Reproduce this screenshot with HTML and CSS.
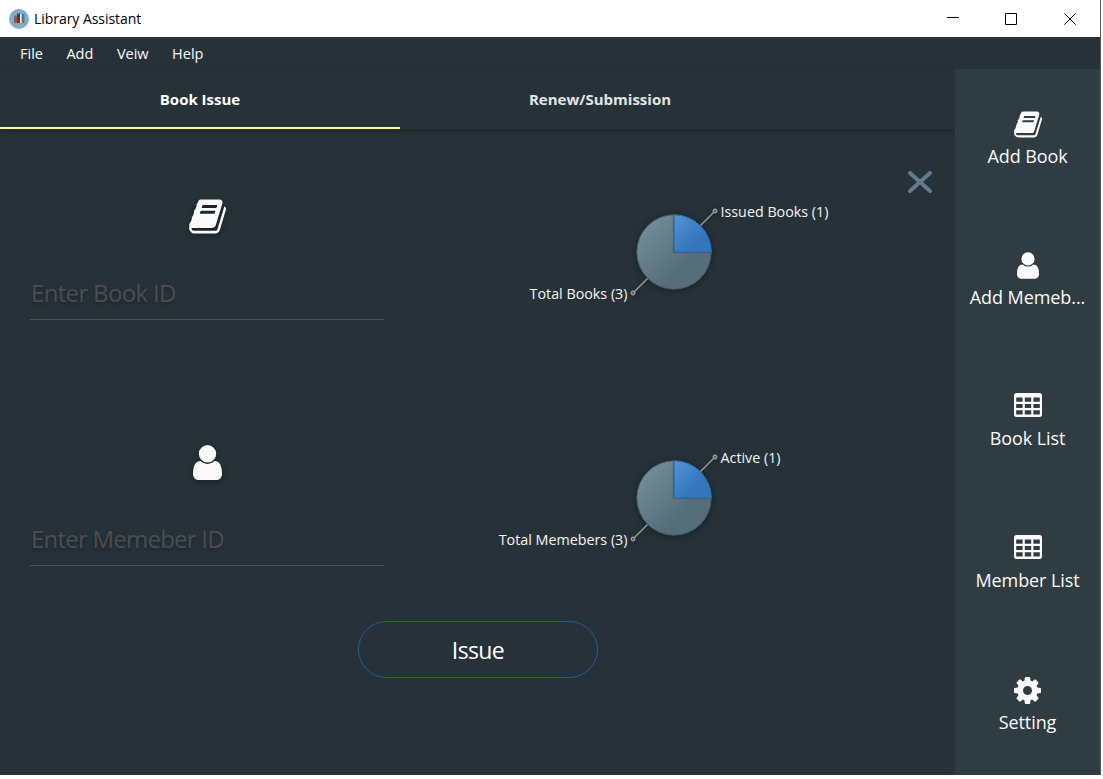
FILE: index.html
```html
<!DOCTYPE html>
<html lang="en">
<head>
<meta charset="utf-8">
<title>Library Assistant</title>
<link rel="stylesheet" href="styles.css">
</head>
<body>
<svg class="defs" width="0" height="0">
  <defs>
    <symbol id="book" viewBox="64 128 1664 1536"><path d="M1703 478q40 57 18 129l-275 906q-19 64-76.500 107.500t-122.500 43.500h-923q-77 0-148.500-53.500t-99.500-131.500q-24-67-2-127 0-4 3-27t4-37q1-8-3-21.500t-3-19.500q2-11 8-21t16.500-23.500 16.500-23.500q23-38 45-91.500t30-91.500q3-10 .5-30t-.5-28q3-11 17-28t17-23q21-36 42-92t25-90q1-9-2.500-32t.5-28q4-13 22-30.500t22-22.500q19-26 42.500-84.500t27.500-96.500q1-8-3-25.500t-2-26.500q2-8 9-18t18-23 17-21q8-12 16.500-30.500t15-35 16-36 19.500-32 26.500-23.500 36-11.500 47.500 5.500l-1 3q38-9 51-9h761q74 0 114 56t18 130l-274 906q-36 119-71.500 153.500t-128.500 34.500h-869q-27 0-38 15-11 16-1 43 24 70 144 70h923q29 0 56-15.500t35-41.500l300-987q7-22 5-57 38 15 59 43zm-1064 2q-4 13 2 22.500t20 9.500h608q13 0 25.500-9.500t16.500-22.500l21-64q4-13-2-22.500t-20-9.500h-608q-13 0-25.500 9.500t-16.500 22.500zm-83 256q-4 13 2 22.500t20 9.500h608q13 0 25.500-9.500t16.500-22.500l21-64q4-13-2-22.500t-20-9.500h-608q-13 0-25.500 9.500t-16.500 22.500z"/></symbol>
    <symbol id="user" viewBox="256 128 1280 1536"><path d="M1536 1399q0 109-62.500 187t-150.500 78h-854q-88 0-150.500-78t-62.500-187q0-85 8.500-160.500t31.500-152 58.500-131 94-89 134.500-34.500q131 128 313 128t313-128q76 0 134.500 34.500t94 89 58.500 131 31.500 152 8.500 160.500zm-256-887q0 159-112.500 271.500t-271.500 112.500-271.500-112.500-112.500-271.500 112.500-271.500 271.500-112.500 271.500 112.500 112.500 271.500z"/></symbol>
    <symbol id="table" viewBox="0 0 28 24"><path fill-rule="evenodd" d="M2.500 0h23A2.500 2.500 0 0 1 28 2.500v19a2.500 2.500 0 0 1-2.500 2.500h-23A2.500 2.500 0 0 1 0 21.500v-19A2.500 2.500 0 0 1 2.500 0zM2.200 4.500v4.200h6.400V4.500zm8.600 0v4.200h6.400V4.500zm8.600 0v4.200h6.400V4.500zM2.200 10.900v4.200h6.400v-4.200zm8.600 0v4.200h6.400v-4.200zm8.600 0v4.200h6.400v-4.200zM2.200 17.300v4.200h6.400v-4.200zm8.600 0v4.200h6.400v-4.200zm8.600 0v4.200h6.400v-4.200z"/></symbol>
    <symbol id="cog" viewBox="128 128 1536 1536"><path d="M1152 896q0-106-75-181t-181-75-181 75-75 181 75 181 181 75 181-75 75-181zm512-109v222q0 12-8 23t-20 13l-185 28q-19 54-39 91 35 50 107 138 10 12 10 25t-9 23q-27 37-99 108t-94 71q-12 0-26-9l-138-108q-44 23-91 38-16 136-29 186-7 28-36 28h-222q-14 0-24.500-8.500t-11.500-21.500l-28-184q-49-16-90-37l-141 107q-10 9-25 9-14 0-25-11-126-114-165-168-7-10-7-23 0-12 8-23 15-21 51-66.500t54-70.500q-27-50-41-99l-183-27q-13-2-21-12.500t-8-23.500v-222q0-12 8-23t19-13l186-28q14-46 39-92-40-57-107-138-10-12-10-24 0-10 9-23 26-36 98.500-107.500t94.500-71.500q13 0 26 10l138 107q44-23 91-38 16-136 29-186 7-28 36-28h222q14 0 24.500 8.500t11.500 21.500l28 184q49 16 90 37l142-107q9-9 24-9 13 0 25 10 129 119 165 170 7 8 7 22 0 12-8 23-15 21-51 66.500t-54 70.500q26 50 41 98l183 28q13 2 21 12.500t8 23.500z"/></symbol>
    <linearGradient id="rest" x1="0" y1="0" x2="1" y2="1"><stop offset=".1" stop-color="#738e99"/><stop offset=".65" stop-color="#566e7a"/></linearGradient>
    <linearGradient id="part" x1="0" y1="0" x2="1" y2="1"><stop offset="0" stop-color="#5495d8"/><stop offset=".65" stop-color="#3376b9"/></linearGradient>
    <symbol id="pie" viewBox="0 0 100 100">
      <circle cx="50" cy="50" r="37.200" fill="url(#rest)" stroke="#465f6c"/>
      <path d="M50 50V12.800A37.200 37.200 0 0 1 87.200 50z" fill="url(#part)" stroke="#2a6cb0"/>
      <path d="M49.500 13V50.500H87" fill="none" stroke="#3d6080" stroke-width="1.200"/>
      <path d="M76.500 23.500L90 10M23.500 76.500L10 90" fill="none" stroke="#a4a7a8" stroke-width="1.200"/>
      <g fill="#5b6468" stroke="#b0b2b3"><circle cx="91" cy="9" r="2"/><circle cx="9" cy="91" r="2"/></g>
    </symbol>
  </defs>
</svg>

<div class="window">
  <header class="titlebar">
    <svg class="app-icon" viewBox="0 0 20 20"><circle cx="10" cy="10" r="10" fill="#76b1d3"/><path d="M5 6.500h3V14H5z" fill="#a05548"/><path d="M8 4.500h3V14H8z" fill="#35465d"/><path d="M11 5h1.800v9H11z" fill="#e4e7e7"/><path d="M12.800 5h2.700v9h-2.700z" fill="#637386"/><path d="M4 14h12.500v1.500H4z" fill="#d28c65"/></svg>
    <span class="title">Library Assistant</span>
    <svg class="controls" viewBox="0 0 136 20" fill="none" stroke="#000"><path d="M0 8.500h12M58.500 4.500h11v11h-11z"/><path d="M117.300 4.300l11.400 11.400m0-11.400l-11.400 11.400"/></svg>
  </header>
  <nav class="menu"><span>File</span><span>Add</span><span>Veiw</span><span>Help</span></nav>
  <div class="body">
    <main class="main">
      <div class="tabs"><div class="tab active">Book Issue</div><div class="tab">Renew/Submission</div></div>
      <div class="content">
        <section class="row">
          <div class="entry"><svg class="glyph book"><use href="#book"/></svg><div class="field">Enter Book ID</div></div>
          <div class="chart"><span class="legend total">Total Books (3)</span><svg class="pie"><use href="#pie"/></svg><span class="legend">Issued Books (1)</span></div>
          <svg class="close" viewBox="0 0 24 22"><path d="M2 2l20 18M22 2L2 20" stroke="#607d8b" stroke-width="4" stroke-linecap="round"/></svg>
        </section>
        <section class="row">
          <div class="entry"><svg class="glyph user"><use href="#user"/></svg><div class="field member">Enter Memeber ID</div></div>
          <div class="chart"><span class="legend total">Total Memebers (3)</span><svg class="pie"><use href="#pie"/></svg><span class="legend">Active (1)</span></div>
        </section>
        <button class="issue">Issue</button>
      </div>
    </main>
    <aside class="side">
      <div class="item"><svg class="i-book"><use href="#book"/></svg><span>Add Book</span></div>
      <div class="item"><svg class="i-user"><use href="#user"/></svg><span>Add Memeb...</span></div>
      <div class="item"><svg class="i-table"><use href="#table"/></svg><span>Book List</span></div>
      <div class="item"><svg class="i-table"><use href="#table"/></svg><span>Member List</span></div>
      <div class="item last"><svg class="i-cog"><use href="#cog"/></svg><span>Setting</span></div>
    </aside>
  </div>
</div>
</body>
</html>
```
FILE: styles.css
```css
* { box-sizing: border-box; }
body { margin: 0; background: #fff; overflow: hidden; font-family: "Open Sans", "Noto Sans", sans-serif; }
svg { display: block; flex: none; }
span { white-space: nowrap; }
.defs { position: absolute; }
.window { width: 1101px; height: 775px; display: flex; flex-direction: column; background: #263238; border-right: 1px solid #55595b; }
.titlebar { height: 37px; display: flex; align-items: center; background: #fff; padding: 0 23px 0 9px; }
.app-icon { width: 20px; height: 20px; margin-right: 5px; }
.title { flex: 1; font-size: 14px; letter-spacing: -.05px; color: #000; }
.controls { width: 136px; height: 20px; margin-right: -6px; }
.menu { height: 32px; display: flex; align-items: center; padding: 2px 0 0 20px; gap: 23.500px; font-size: 14.500px; color: #fafafa; line-height: 30px; }
.body { height: 706px; display: flex; }
.main { width: 955px; display: flex; flex-direction: column; }
.tabs { height: 60px; display: flex; box-shadow: 0 2px 5px rgba(0, 0, 0, .25); }
.tab { width: 400px; text-align: center; font-size: 15px; font-weight: 700; line-height: 60px; color: #e2e4e5; }
.tab.active { color: #fff; border-bottom: 2px solid #ffff8d; }
.content { flex: 1; display: flex; flex-direction: column; padding-top: 36px; }
.row { height: 246px; display: flex; padding-left: 30px; }
.entry { width: 354px; display: flex; flex-direction: column; align-items: center; padding-top: 34px; }
.glyph { fill: #fafafa; filter: drop-shadow(0 2px 3px rgba(0, 0, 0, .4)); }
.glyph.book { width: 37px; height: 35px; }
.glyph.user { width: 29px; height: 35px; }
.field { width: 354px; height: 53px; margin-top: 33px; border-bottom: 1px solid #4d5254; padding-left: 1px; font-size: 24px; letter-spacing: -.67px; line-height: 51px; color: #4d4d4d; text-shadow: 0 2px 3px rgba(0, 0, 0, .25); }
.field.member { letter-spacing: -.77px; }
.chart { display: flex; padding-top: 37px; }
.legend { font-size: 14.300px; line-height: 20px; color: #f5f5f5; }
.legend.total { width: 243.500px; display: flex; justify-content: flex-end; padding-top: 82px; }
.pie { width: 100px; height: 100px; margin: 0 -3.500px; filter: drop-shadow(0 1px 3px rgba(0, 0, 0, .4)); }
.close { width: 24px; height: 22px; margin: 6px 23px 0 auto; }
.issue { width: 240px; height: 57px; margin: -36px 0 0 358px; padding: 0; border: 1px solid #1c5ba6; border-radius: 29px; background: none; color: #fff; font: 23px "Open Sans", "Noto Sans", sans-serif; letter-spacing: -.6px; }
.side { width: 145px; background: #2f3c42; display: flex; flex-direction: column; }
.item { height: 141.300px; padding-top: 42px; display: flex; flex-direction: column; align-items: center; fill: #fafafa; color: #fafafa; font-size: 18px; letter-spacing: -.08px; line-height: 24px; }
.item.last { padding-top: 43px; }
.item svg { height: 27px; margin-bottom: 6px; }
.item .i-book { width: 28px; }
.item .i-user { width: 22px; }
.item .i-table { width: 28px; height: 24px; margin-bottom: 9px; }
.item .i-cog { width: 27px; }
```
